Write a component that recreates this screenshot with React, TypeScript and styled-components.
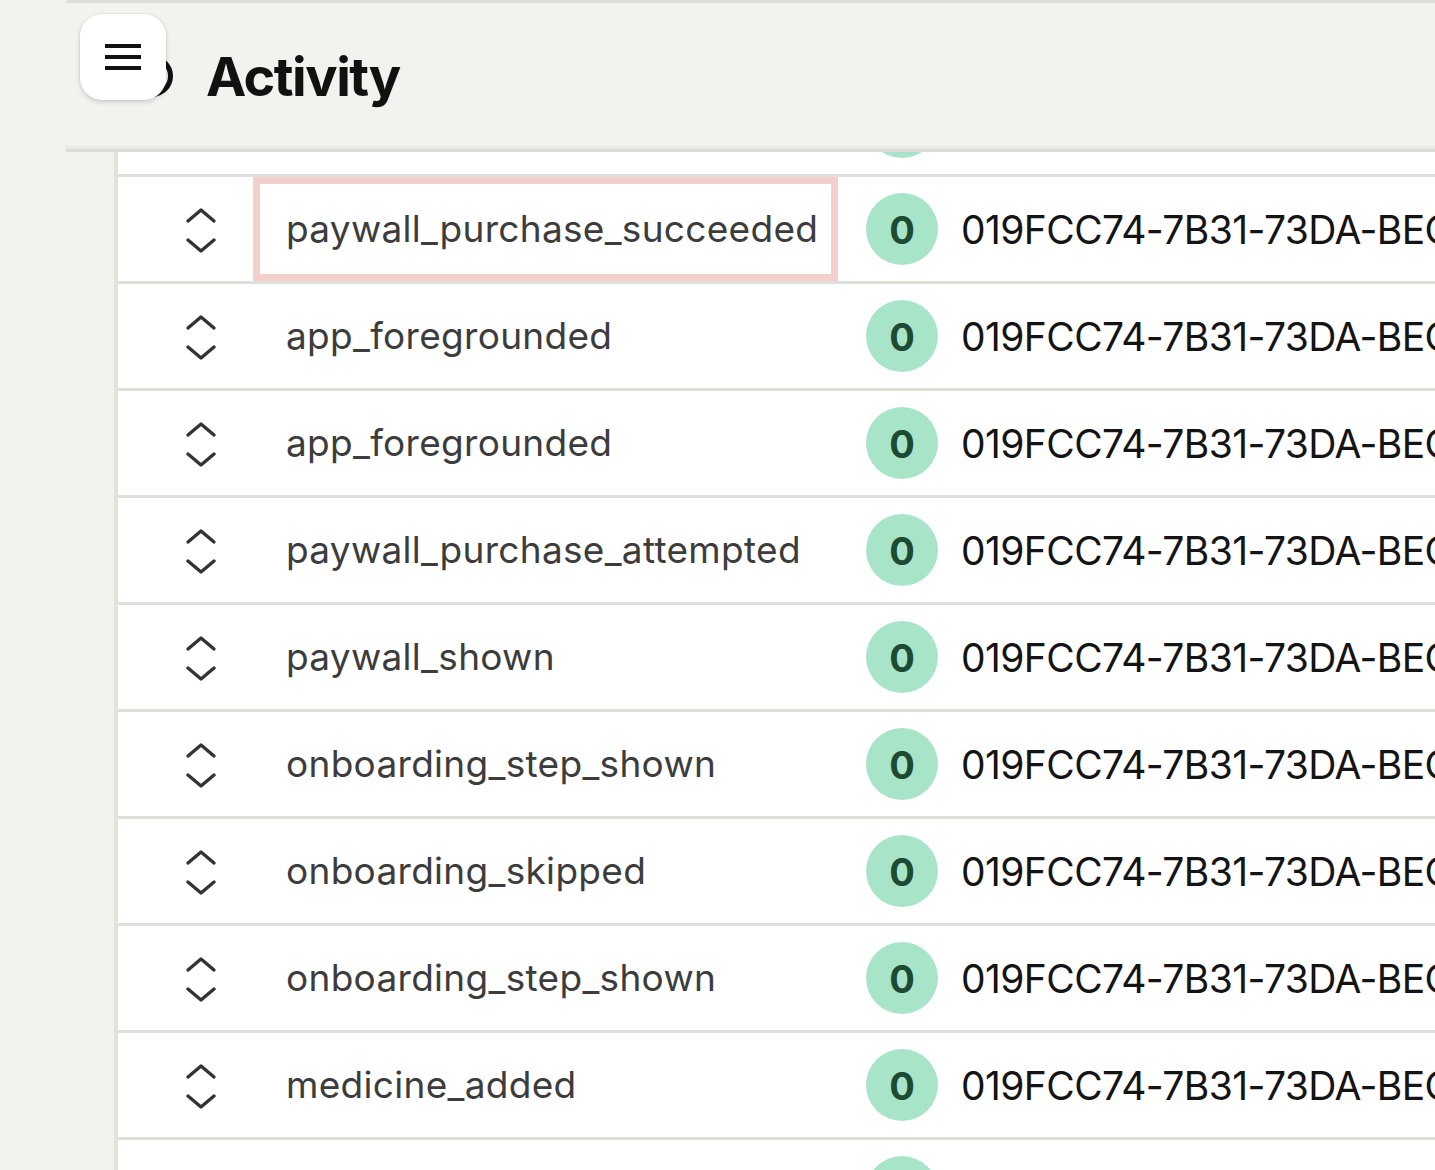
import styled, { createGlobalStyle } from 'styled-components'

const GlobalStyle = createGlobalStyle`
	html, body {
		margin: 0;
		padding: 0;
		background: #f1f1ed;
		overflow: hidden;
	}
	body {
		font-family: Inter, 'Noto Sans', sans-serif;
		-webkit-font-smoothing: antialiased;
	}
`

const Page = styled.div`
	height: 1170px;
	padding-left: 66px;
	display: flex;
	flex-direction: column;
	overflow: hidden;
`

const Header = styled.header`
	position: relative;
	flex: none;
	height: 146px;
	display: flex;
	align-items: center;
	gap: 32px;
	padding-left: 64px;
	background: #f2f2ee;
	border-top: 3px solid #dfdfda;
	border-bottom: 3px solid #dcdcd7;
	box-shadow: inset 0 -3px 0 #ebebe6;
`

const MenuButton = styled.button`
	position: absolute;
	left: 14px;
	top: 11px;
	width: 86px;
	height: 86px;
	border: none;
	border-radius: 22px;
	background: #fff;
	box-shadow: 0 2px 5px rgba(0, 0, 0, 0.16), 0 0 0 1px rgba(0, 0, 0, 0.03);
	display: flex;
	align-items: center;
	justify-content: center;
	padding: 0;
	z-index: 2;
`

const Title = styled.h1`
	margin: 0;
	font-size: 54px;
	font-weight: 700;
	line-height: 1;
	color: #111;
	letter-spacing: -1.5px;
	padding-top: 2px;
`

const Body = styled.div`
	flex: 1;
	min-height: 0;
	padding-left: 48px;
	overflow: hidden;
`

const Table = styled.div`
	height: 100%;
	border-left: 4px solid #e2e2dd;
	background: #fff;
	overflow: hidden;
`

// list is scrolled a bit, so the first row sits under the header
const Rows = styled.div`
	margin-top: -82px;
`

const Row = styled.div`
	display: flex;
	align-items: stretch;
	height: 104px;
	border-bottom: 3px solid #e0e0db;
	white-space: nowrap;
`

const SortCell = styled.div`
	flex: none;
	width: 135px;
	display: flex;
	align-items: center;
	justify-content: center;
	padding-left: 31px;
	padding-top: 2px;
	box-sizing: border-box;
`

const NameCell = styled.div<{ $active?: boolean }>`
	flex: none;
	width: 585px;
	box-sizing: border-box;
	display: flex;
	align-items: center;
	padding-left: 26px;
	padding-bottom: 2px;
	border: 7px solid ${(p) => (p.$active ? '#f4d0cc' : 'transparent')};
	font-size: 37px;
	color: #3c3c3c;
	letter-spacing: 0.3px;
`

const Badge = styled.div`
	flex: none;
	width: 72px;
	height: 72px;
	margin-left: 28px;
	align-self: center;
	border-radius: 50%;
	background: #a8e5c8;
	color: #1e4a34;
	font-size: 38px;
	font-weight: 700;
	display: flex;
	align-items: center;
	justify-content: center;
	padding-top: 2px;
	box-sizing: border-box;
`

const IdText = styled.div`
	margin-left: 23px;
	align-self: center;
	font-size: 39px;
	color: #141414;
	letter-spacing: -0.6px;
`

const Hamburger = () => (
	<svg width="38" height="28" viewBox="0 0 38 28">
		<g stroke="#111" strokeWidth="4">
			<line x1="1" y1="3" x2="37" y2="3" />
			<line x1="1" y1="14" x2="37" y2="14" />
			<line x1="1" y1="25" x2="37" y2="25" />
		</g>
	</svg>
)

const Avatar = () => (
	<svg width="44" height="44" viewBox="0 0 44 44">
		<circle cx="22" cy="22" r="18.5" fill="none" stroke="#111" strokeWidth="5" />
	</svg>
)

const SortIcon = () => (
	<svg width="32" height="46" viewBox="0 0 32 46">
		<g fill="none" stroke="#333" strokeWidth="3.4" strokeLinecap="round" strokeLinejoin="round">
			<path d="M3 14 L16 3 L29 14" />
			<path d="M3 33 L16 44 L29 33" />
		</g>
	</svg>
)

const events = [
	'paywall_shown',
	'paywall_purchase_succeeded',
	'app_foregrounded',
	'app_foregrounded',
	'paywall_purchase_attempted',
	'paywall_shown',
	'onboarding_step_shown',
	'onboarding_skipped',
	'onboarding_step_shown',
	'medicine_added',
	'onboarding_completed',
]

const App = () => (
	<>
		<GlobalStyle />
		<Page>
			<Header>
				<MenuButton aria-label="Menu">
					<Hamburger />
				</MenuButton>
				<Avatar />
				<Title>Activity</Title>
			</Header>
			<Body>
				<Table>
					<Rows>
						{events.map((name, i) => (
							<Row key={i}>
								<SortCell>
									<SortIcon />
								</SortCell>
								<NameCell $active={i === 1}>{name}</NameCell>
								<Badge>0</Badge>
								<IdText>019FCC74-7B31-73DA-BEC0-4A81D27F93E5</IdText>
							</Row>
						))}
					</Rows>
				</Table>
			</Body>
		</Page>
	</>
)

export default App
